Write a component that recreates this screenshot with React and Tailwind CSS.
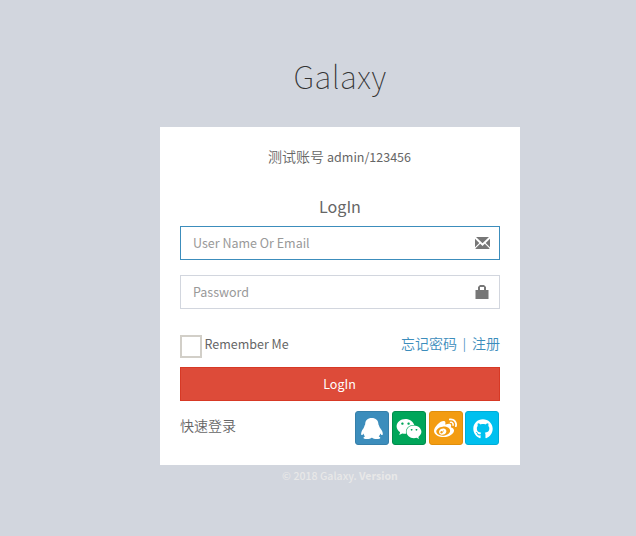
import { FaWeixin, FaWeibo, FaGithub } from "react-icons/fa";

function Penguin({ size }) {
  return (
    <svg width={size} height={size} viewBox="0 0 24 24" fill="#fff">
      <path d="M11.7 2C7.600 2 5.300 4.500 5.200 8c0 1-.9 1.600-1 2.800-.1.900-1.700 2.700-2.400 4.200-.9 1.900-.8 4-.2 4.100.6.100 1.500-.9 1.800-1.700.2 1.200.7 2.100 1.600 3-.8.300-1.500.8-1.500 1.400 0 1 1.500 1.300 3.300 1.300 2.300 0 4-.5 4.800-1.300h.5c.8.800 2.500 1.300 4.700 1.300 1.900 0 3.500-.3 3.500-1.300 0-.6-.8-1.100-1.600-1.400.9-.9 1.500-1.800 1.700-3 .4.800 1.200 1.800 1.900 1.700.7-.1.700-2.200-.2-4.100-.8-1.600-2.600-3.300-2.700-4.200-.1-1.200-1-1.800-1-2.800C18.300 4.500 15.900 2 11.700 2z" />
    </svg>
  );
}

const socials = [
  { name: "QQ", Icon: Penguin, box: "bg-[#3c8dbc] border-[#367fa9]", size: 24 },
  { name: "WeChat", Icon: FaWeixin, box: "bg-[#00a65a] border-[#008d4c] pt-px", size: 26 },
  { name: "Weibo", Icon: FaWeibo, box: "bg-[#f39c12] border-[#e08e0b] pt-px", size: 23 },
  { name: "GitHub", Icon: FaGithub, box: "-ml-[0.7px] bg-[#00c0ef] border-[#00acd6] pt-[2px] pl-px", size: 20 },
];

function Envelope() {
  return (
    <svg width="15" height="12" viewBox="0 0 15 12" fill="#777">
      <path d="M1 0h13L7.500 6.300zM0 1.800 4.300 6 0 10.200zM15 1.800 10.700 6l4.300 4.200zM5.200 6.800l2.300 2.100 2.300-2.100 4.600 4.500v.7H.6v-.7z" />
    </svg>
  );
}

function Lock() {
  return (
    <svg width="14" height="14" viewBox="0 0 14 14" fill="#777">
      <path d="M3 5V2l2-2h4l2 2v3h2.500v9H.5V5zM5 5h4V2H5z" />
    </svg>
  );
}

function Field({ type, label, border, children }) {
  return (
    <label className={`flex h-[34px] items-center border bg-white pl-3 ${border}`}>
      <input
        type={type}
        placeholder={label}
        className="h-full min-w-0 flex-1 bg-transparent pb-[2px] text-[12.5px] outline-none placeholder:text-[#999]"
      />
      <span className="flex w-[34px] items-center justify-center">{children}</span>
    </label>
  );
}

export default function App() {
  return (
    <main className="flex h-[536px] flex-col items-center bg-[#d2d6de] pl-11 font-['Noto_Sans_CJK_SC',sans-serif] text-[14px] leading-5 text-[#666]">
      <h1 className="mt-[51px] h-[76px] text-[31.2px] leading-[50px] font-thin tracking-[0.45px] text-[#333]">Galaxy</h1>
      <section className="h-[338px] w-[360px] bg-white p-5">
        <p className="-mt-px mr-px flex h-5 items-center justify-center gap-[3px] font-[350]">
          测试账号 <span className="pt-[2px] text-[12.5px] font-normal">admin/123456</span>
        </p>
        <h2 className="mt-[30px] h-[30px] text-center text-[16.1px] leading-5">LogIn</h2>
        <form className="flex flex-col gap-[15px]">
          <Field type="text" label="User Name Or Email" border="border-[#3c8dbc]">
            <Envelope />
          </Field>
          <Field type="password" label="Password" border="border-[#d2d6de]">
            <Lock />
          </Field>
        </form>
        <div className="mt-[25px] flex h-[33px] items-start justify-between">
          <label className="flex items-start gap-[2.5px]">
            <span className="mt-px h-[23px] w-[22px] border-2 border-[#d2cfc8] bg-white" />
            <span className="text-[12.5px] leading-5">Remember Me</span>
          </label>
          <div className="-mt-px flex font-[350] text-[#3c8dbc]">
            <a>忘记密码</a>
            <span className="w-[15px] text-center text-[12.5px]">|</span>
            <a>注册</a>
          </div>
        </div>
        <button className="flex h-[34px] w-full items-center justify-center border border-[#d73925] bg-[#dd4b39] pr-px text-[12.5px] text-white">
          LogIn
        </button>
        <div className="mt-[10px] flex items-start justify-between">
          <span className="mt-1 font-[350]">快速登录</span>
          <div className="mr-px flex gap-[3px]">
            {socials.map(({ name, Icon, box, size }) => (
              <a
                key={name}
                aria-label={name}
                className={`flex size-[34px] items-center justify-center rounded-[3px] border text-white ${box}`}
              >
                <Icon size={size} />
              </a>
            ))}
          </div>
        </div>
      </section>
      <footer className="text-[10.6px] leading-[22px] font-medium text-[#e8e8e8]">
        © 2018 Galaxy. <b>Version</b>
      </footer>
    </main>
  );
}
